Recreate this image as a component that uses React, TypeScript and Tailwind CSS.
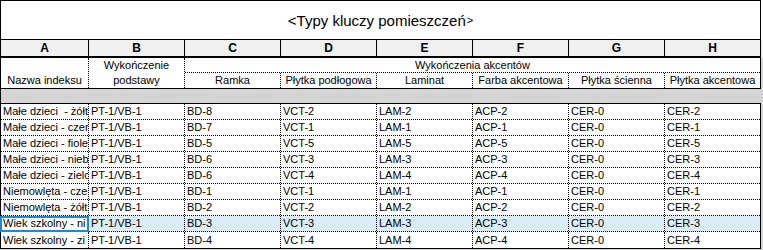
import React from "react";

const rows: string[][] = [
  ["Małe dzieci  - żółt", "PT-1/VB-1", "BD-8", "VCT-2", "LAM-2", "ACP-2", "CER-0", "CER-2"],
  ["Małe dzieci - czer", "PT-1/VB-1", "BD-7", "VCT-1", "LAM-1", "ACP-1", "CER-0", "CER-1"],
  ["Małe dzieci - fiole", "PT-1/VB-1", "BD-5", "VCT-5", "LAM-5", "ACP-5", "CER-0", "CER-5"],
  ["Małe dzieci - niebi", "PT-1/VB-1", "BD-6", "VCT-3", "LAM-3", "ACP-3", "CER-0", "CER-3"],
  ["Małe dzieci - zielo", "PT-1/VB-1", "BD-6", "VCT-4", "LAM-4", "ACP-4", "CER-0", "CER-4"],
  ["Niemowlęta - cze", "PT-1/VB-1", "BD-1", "VCT-1", "LAM-1", "ACP-1", "CER-0", "CER-1"],
  ["Niemowlęta - żółt", "PT-1/VB-1", "BD-2", "VCT-2", "LAM-2", "ACP-2", "CER-0", "CER-2"],
  ["Wiek szkolny - ni", "PT-1/VB-1", "BD-3", "VCT-3", "LAM-3", "ACP-3", "CER-0", "CER-3"],
  ["Wiek szkolny - zi", "PT-1/VB-1", "BD-4", "VCT-4", "LAM-4", "ACP-4", "CER-0", "CER-4"],
];

const letters = ["A", "B", "C", "D", "E", "F", "G", "H"];
const sub = ["Ramka", "Płytka podłogowa", "Laminat", "Farba akcentowa", "Płytka ścienna", "Płytka akcentowa"];

const grid = "grid grid-cols-[88px_96px_96px_96px_96px_96px_96px_95px]";

export default function App() {
  return (
    <div
      className="w-[763px] h-[250px] bg-[#d4d4d4] overflow-hidden text-black"
      style={{ fontFamily: '"Liberation Sans", Arial, sans-serif' }}
    >
      {/* Title */}
      <div className="bg-white w-[763px]">
        <div className="w-[761px] h-[40px] border border-black flex items-center justify-center text-[15px] leading-none">
          <span>&lt;Typy kluczy pomieszczeń</span>
          <span className="text-[11px] ml-px">&gt;</span>
        </div>
      </div>
      {/* Letter row */}
      <div className="bg-[#f0f0f0] w-[763px]">
        <div className={`${grid} w-[761px] h-[18px] border-x border-black border-b-2 bg-[#f0f0f0]`}>
          {letters.map((l, i) => (
            <div
              key={l}
              className={`flex items-center justify-center text-[12px] font-bold leading-none ${
                i < 7 ? "border-r border-black" : ""
              }`}
            >
              {l}
            </div>
          ))}
        </div>
      </div>
      {/* Header rows */}
      <div className={`${grid} w-[761px] h-[31px] bg-white border-x border-b border-black text-[11px] leading-[15px]`}>
        <div className="border-r border-dotted border-black flex items-end justify-center">Nazwa indeksu</div>
        <div className="border-r border-dotted border-black flex flex-col items-center">
          <span>Wykończenie</span>
          <span>podstawy</span>
        </div>
        <div className="col-span-6 flex flex-col">
          <div className="h-[15px] border-b border-dotted border-black flex items-start justify-center leading-[14px]">
            Wykończenia akcentów
          </div>
          <div className="grid grid-cols-[96px_96px_96px_96px_96px_95px] flex-1">
            {sub.map((s, i) => (
              <div
                key={s}
                className={`flex items-center justify-center whitespace-nowrap ${
                  i < 5 ? "border-r border-dotted border-black" : ""
                }`}
              >
                {s}
              </div>
            ))}
          </div>
        </div>
      </div>
      {/* Gray band */}
      <div className="w-[761px] h-[15px] border-l border-black border-b bg-[#d4d4d4]" />
      {/* Data */}
      <div className="w-[761px] border-x border-b border-black bg-white text-[11px]">
        {rows.map((r, ri) => {
          const sel = ri === 7;
          return (
            <div
              key={ri}
              className={`${grid} h-[16px] ${ri < rows.length - 1 ? "border-b border-dotted border-black" : ""} ${
                sel ? "bg-[#dbedf9]" : ""
              }`}
            >
              {r.map((c, ci) => (
                <div
                  key={ci}
                  className={`relative flex items-center pl-[2px] min-w-0 leading-none ${
                    ci < 7 ? "border-r border-dotted border-black" : ""
                  } ${sel && ci === 0 ? "bg-white" : ""}`}
                >
                  <span className="overflow-hidden whitespace-pre block w-full">{c}</span>
                  {sel && ci === 0 && (
                    <div className="absolute -left-px top-0 -right-px -bottom-px border-2 border-[#1a8ad4] pointer-events-none" />
                  )}
                </div>
              ))}
            </div>
          );
        })}
      </div>
    </div>
  );
}
